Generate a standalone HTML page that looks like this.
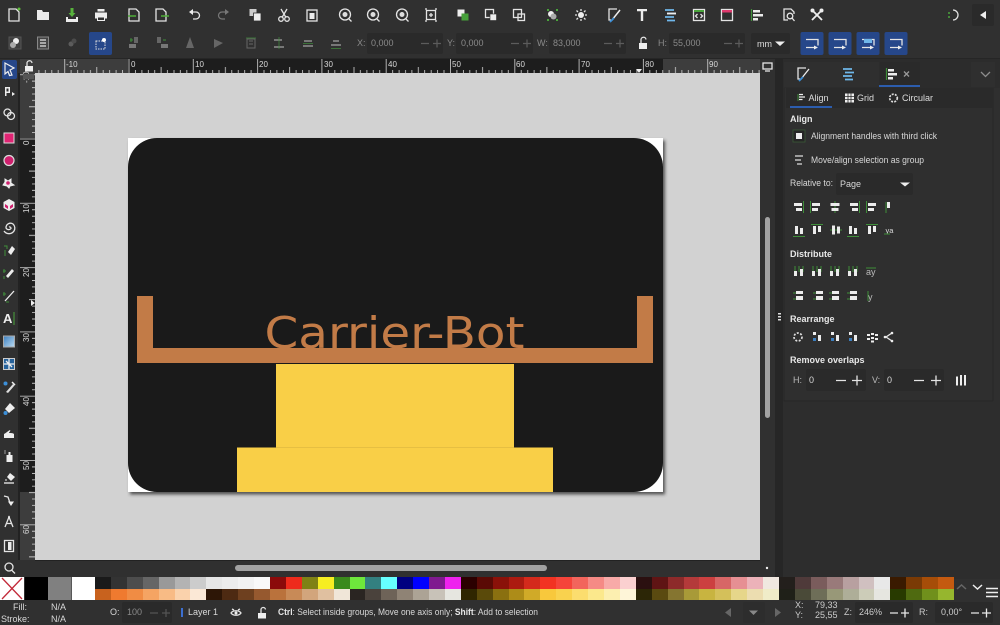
<!DOCTYPE html>
<html><head><meta charset="utf-8"><style>
html,body{margin:0;padding:0;width:1000px;height:625px;overflow:hidden;background:#303030}
svg{position:absolute;left:0;top:0}
text{font-family:"Liberation Sans",sans-serif;font-size:9px;fill:#d8d8d8}
.b{font-weight:bold;fill:#e8e8e8}
.g{fill:#8a8a8a}
.s{fill:none;stroke:#e4e4e4;stroke-width:1.3}
.d{fill:none;stroke:#777;stroke-width:1.2}
.w{fill:#ececec}
.gr{fill:none;stroke:#3f8f3a;stroke-width:1}
.row{position:absolute;left:95px;width:859px;height:11.5px;display:flex}
.row i{flex:1;display:block}
</style></head><body>
<svg width="1000" height="625" viewBox="0 0 1000 625">
<defs>
<filter id="bl" x="-5%" y="-5%" width="110%" height="110%"><feGaussianBlur stdDeviation="1.6"/></filter>
<pattern id="tt" patternUnits="userSpaceOnUse" x="128.5" y="59" width="64.3" height="14"><path d="M.5 0V14M6.9 11V14M13.4 11V14M19.8 11V14M26.2 11V14M32.6 8V14M39 11V14M45.5 11V14M51.9 11V14M58.3 11V14" stroke="#d4d4d4" stroke-width=".8" fill="none"/></pattern>
<pattern id="tv" patternUnits="userSpaceOnUse" x="20" y="138.5" width="15" height="64.3"><path d="M0 .5H15M12 6.9H15M12 13.4H15M12 19.8H15M12 26.2H15M9 32.6H15M12 39H15M12 45.5H15M12 51.9H15M12 58.3H15" stroke="#d4d4d4" stroke-width=".8" fill="none"/></pattern>
<g id="a1"><path class="gr" d="M-5.500 -6V6"/><rect class="w" x="-4" y="-4" width="8" height="3"/><rect class="w" x="-4" y="1" width="6" height="3"/></g>
<g id="a1c"><path class="gr" d="M0 -6V6"/><rect class="w" x="-4.500" y="-4" width="9" height="3"/><rect class="w" x="-3.500" y="1" width="7" height="3"/></g>
<g id="a1r"><path class="gr" d="M5.500 -6V6"/><rect class="w" x="-4" y="-4" width="8" height="3"/><rect class="w" x="-2" y="1" width="6" height="3"/></g>
<g id="a2"><path class="gr" d="M-6 6.500H6"/><rect class="w" x="-4" y="-4" width="3" height="8"/><rect class="w" x="1" y="-2" width="3" height="6"/></g>
<g id="a2c"><path class="gr" d="M-6 0H6"/><rect class="w" x="-4" y="-4.500" width="3" height="9"/><rect class="w" x="1" y="-3.500" width="3" height="7"/></g>
<g id="a2t"><path class="gr" d="M-6 -5.500H6"/><rect class="w" x="-4" y="-4" width="3" height="8"/><rect class="w" x="1" y="-4" width="3" height="6"/></g>
<g id="d1"><path class="gr" d="M-4 -6V0M0 -6V0M4 -6V0"/><rect class="w" x="-5" y="-1" width="3" height="5"/><rect class="w" x="1" y="-3" width="3" height="7"/></g>
<g id="d2"><path class="gr" d="M-6 -3H0M-6 3H0"/><rect class="w" x="-3" y="-5" width="7" height="3"/><rect class="w" x="-3" y="0" width="7" height="4"/></g>
<g id="re"><rect class="w" x="-4" y="-5" width="3" height="3"/><rect class="w" x="1" y="-2" width="3" height="6"/><rect x="-4" y="1" width="3" height="3" fill="#3c7fc0"/></g>
<g id="doc"><path class="s" d="M-5 -6H2L5 -3V6H-5Z"/></g>
<g id="blu"><rect x="-11.500" y="-11.500" width="23" height="23" rx="2" fill="#26478a"/><path class="s" d="M-6 -4H6V2M-6 4H4"/><path d="M2 2L6 4L2 6Z" fill="#eee"/></g>
<g id="mag"><circle r="5.500" cy="-.5" class="s" stroke-width="2"/><path class="s" d="M4 4L6.500 6.500"/><circle r="2.500" cy="-.5" fill="#ddd"/></g>
</defs>

<!-- base -->
<rect width="1000" height="625" fill="#303030"/>
<rect x="0" y="58" width="1000" height="1" fill="#262626"/>

<!-- rulers -->
<rect x="20" y="59" width="740" height="14" fill="#3d3d3d"/>
<rect x="128" y="59" width="535" height="14" fill="#1d1d1d"/>
<rect x="35" y="59" width="725" height="14" fill="url(#tt)"/>
<rect x="18" y="73" width="2" height="487" fill="#222"/>
<rect x="20" y="73" width="15" height="487" fill="#3d3d3d"/>
<rect x="20" y="138" width="15" height="354" fill="#1d1d1d"/>
<rect x="20" y="73" width="15" height="487" fill="url(#tv)"/>
<g fill="#cfcfcf">
<text x="66" y="67" font-size="8" style="font-size:8px">-10</text>
<text x="131" y="67" style="font-size:8px">0</text><text x="195" y="67" style="font-size:8px">10</text><text x="259" y="67" style="font-size:8px">20</text><text x="324" y="67" style="font-size:8px">30</text><text x="388" y="67" style="font-size:8px">40</text><text x="452" y="67" style="font-size:8px">50</text><text x="516" y="67" style="font-size:8px">60</text><text x="581" y="67" style="font-size:8px">70</text><text x="645" y="67" style="font-size:8px">80</text><text x="709" y="67" style="font-size:8px">90</text>
</g>
<g style="font-size:8px">
<text transform="translate(29,83) rotate(-90)" style="font-size:8px">-10</text>
<text transform="translate(29,145) rotate(-90)" style="font-size:8px">0</text>
<text transform="translate(29,213) rotate(-90)" style="font-size:8px">10</text>
<text transform="translate(29,277) rotate(-90)" style="font-size:8px">20</text>
<text transform="translate(29,342) rotate(-90)" style="font-size:8px">30</text>
<text transform="translate(29,406) rotate(-90)" style="font-size:8px">40</text>
<text transform="translate(29,470) rotate(-90)" style="font-size:8px">50</text>
<text transform="translate(29,534) rotate(-90)" style="font-size:8px">60</text>
</g>
<path d="M636 69H642L639 73Z" fill="#eee"/><path d="M31 300V306L35 303Z" fill="#eee"/>
<!-- corner lock -->
<rect x="25" y="66" width="8" height="5.500" fill="#eee"/><path class="s" d="M27 66V63.500A2.500 2.500 0 0 1 32 63" />
<rect x="23" y="74" width="11" height="5" fill="#555"/>

<!-- canvas -->
<rect x="35" y="73" width="725" height="487" fill="#d2d2d2"/>
<rect x="128" y="138" width="535" height="354" fill="#333" opacity=".8" transform="translate(2,2.500)" filter="url(#bl)"/>
<rect x="128" y="138" width="535" height="354" fill="#fff"/>
<rect x="128" y="138" width="535" height="354" rx="29" fill="#1a1a1a"/>
<text x="264.500" y="348" textLength="260" lengthAdjust="spacingAndGlyphs" style="font-family:'DejaVu Sans',sans-serif;font-size:44px;fill:#c27b47">Carrier-Bot</text>
<path d="M137 296H153V348H637V296H653V363H137Z" fill="#c27b47"/>
<rect x="276" y="364" width="238" height="83.500" fill="#f9cf47"/>
<rect x="237" y="447.500" width="316" height="44.500" fill="#f9cf47"/>
<rect x="276" y="447" width="238" height=".7" fill="#dfb840"/>

<!-- scrollbars -->
<rect x="760" y="59" width="15" height="513" fill="#303030"/>
<rect x="775" y="59" width="8" height="520" fill="#262626"/>
<rect x="765" y="217" width="5" height="201" rx="2.500" fill="#a2a2a2"/>
<path d="M778 313h3v1.500h-3zM778 316h3v1.500h-3zM778 319h3v1.500h-3z" fill="#ddd"/>
<rect x="0" y="560" width="775" height="17" fill="#303030"/>
<rect x="35" y="560" width="725" height="1" fill="#222"/>
<rect x="235" y="565" width="312" height="6" rx="3" fill="#a2a2a2"/>
<circle cx="767" cy="568" r="1.200" fill="#eee"/>
<!-- monitor icon -->
<rect x="763" y="63" width="9" height="6" class="s"/><path class="s" d="M765 71H770"/>

<!-- top toolbar icons (row 1) -->
<g transform="translate(14,15)"><use href="#doc"/><circle cx="5" cy="-6" r="1.500" fill="#5fbf3a"/></g>
<g transform="translate(43,15)"><path class="w" d="M-6 -5H-1L0 -3H6V5H-6Z"/></g>
<g transform="translate(72,15)"><path d="M-1.500 -7H1.500V-2H3.500L0 2L-3.500 -2H-1.500Z" fill="#57b23c"/><path class="w" d="M-6 2H-4V4H4V2H6V7H-6Z"/></g>
<g transform="translate(101,15)"><rect class="w" x="-6" y="-2.500" width="12" height="6"/><rect class="w" x="-3.500" y="-6" width="7" height="2.500"/><rect x="-3.500" y="2" width="7" height="3.500" fill="#303030" stroke="#eee"/></g>
<g transform="translate(134,15)"><use href="#doc"/><path d="M-6 1H2" stroke="#4fae38" stroke-width="1.500"/></g>
<g transform="translate(161,15)"><use href="#doc"/><path d="M0 1H8" stroke="#4fae38" stroke-width="1.500"/></g>
<g transform="translate(195,15)"><path class="s" d="M-4 -3H1A3.500 3.500 0 0 1 1 4H-2" stroke-width="1.500"/><path d="M-2 -6V0L-6 -3Z" fill="#eee"/></g>
<g transform="translate(223,15)"><path class="d" d="M4 -3H-1A3.500 3.500 0 0 0 -1 4H2" stroke-width="1.500"/><path d="M2 -6V0L6 -3Z" fill="#777"/></g>
<g transform="translate(255,15)"><rect x="-5.500" y="-6" width="7" height="7" fill="#ccc"/><rect x="-1.500" y="-2" width="7.500" height="8" fill="#eee" stroke="#303030" stroke-width=".8"/></g>
<g transform="translate(284,15)"><circle cx="-3" cy="4" r="2.300" class="s"/><circle cx="3" cy="4" r="2.300" class="s"/><path class="s" d="M-3 -6L2 2.500M3 -6L-2 2.500"/></g>
<g transform="translate(312,15)"><rect class="s" x="-5" y="-5" width="10" height="11"/><rect class="w" x="-2.500" y="-2" width="5" height="6"/></g>
<use href="#mag" x="345" y="15"/><use href="#mag" x="373" y="15"/><use href="#mag" x="402" y="15"/>
<g transform="translate(431,15)"><rect class="s" x="-4.500" y="-4.500" width="9" height="9"/><path class="s" d="M-2 0H2M0 -2V2M-6 -6H-4M4 -6H6M-6 6H-4M4 6H6"/></g>
<g transform="translate(463,15)"><rect x="-5.500" y="-5.500" width="7" height="7" fill="#eee"/><rect x="-1.500" y="-1.500" width="7" height="7" fill="#46a03a"/></g>
<g transform="translate(491,15)"><rect x="-5.500" y="-5.500" width="8" height="8" class="s"/><rect x="-1" y="-1" width="6.500" height="6.500" fill="#eee" stroke="#303030" stroke-width=".6"/></g>
<g transform="translate(519,15)"><rect x="-5.500" y="-5.500" width="8" height="8" class="s"/><rect x="-1" y="-1" width="6.500" height="6.500" class="s"/></g>
<g transform="translate(552,15)"><circle cx="-1" cy="-1" r="3" fill="#eee"/><circle cx="1.500" cy="1.500" r="3" fill="#aaa"/><path d="M-5 -6h2v2h-2zM4 -6h2v2h-2zM-5 4h2v2h-2zM4 4h2v2h-2z" fill="#4aa53c"/></g>
<g transform="translate(581,15)"><circle r="3" fill="#eee"/><path class="s" d="M-6 0H-4M4 0H6M0 -6V-4M0 4V6M-4.500 -4.500L-3 -3M3 3L4.500 4.500M4.500 -4.500L3 -3M-3 3L-4.500 4.500"/></g>
<g transform="translate(614,15)"><path class="s" d="M3 -6H-5V5H-3"/><path d="M6 -5L-2 5" stroke="#eee" stroke-width="1.500"/><path d="M0 3L-4 7" stroke="#3c8fd8" stroke-width="1.800"/></g>
<g transform="translate(642,15)"><path class="w" d="M-5 -6H5V-3.800H1.200V6H-1.200V-3.800H-5Z"/></g>
<g transform="translate(670,15)"><path d="M-5 -5H4M-3 -1.500H6M-5 2H4M-3 5.500H5" stroke="#6fb7ea" stroke-width="1.800" fill="none"/><path d="M-3 -1.500H6" stroke="#eee" stroke-width="1.800"/></g>
<g transform="translate(699,15)"><rect class="s" x="-5.500" y="-5.500" width="11" height="11"/><rect x="-5" y="-5" width="10" height="2" fill="#4aa53c"/><path class="s" d="M-1.500 -1L-3.500 1L-1.500 3M1.500 -1L3.500 1L1.500 3" stroke-width="1"/></g>
<g transform="translate(727,15)"><rect class="s" x="-5.500" y="-5.500" width="11" height="11"/><rect x="-5" y="-5" width="10" height="2.500" fill="#e03a6e"/></g>
<g transform="translate(757,15)"><path d="M-5.500 -6V6" stroke="#3f8f3a" stroke-width="1.200"/><rect class="w" x="-4" y="-5" width="7" height="2.500"/><rect class="w" x="-4" y="-1" width="10" height="2.500"/><rect class="w" x="-4" y="3" width="5" height="2.500"/></g>
<g transform="translate(789,15)"><path class="s" d="M-1 5H-5V-6H2L5 -3V-1"/><circle cx="1" cy="1" r="2.800" class="s"/><path class="s" d="M3 3L5.500 6"/></g>
<g transform="translate(817,15)"><path d="M-4 -4L5 5M5 -5L-5 5" stroke="#eee" stroke-width="1.800"/><circle cx="-4.500" cy="-4.500" r="2" fill="#eee"/><circle cx="4.500" cy="-4.500" r="2" fill="#eee"/></g>
<g transform="translate(954,15)"><path class="s" d="M-1 -5A5 5 0 1 1 -1 5" stroke-width="1.800"/><path d="M-5 -3V-1M-5 1V3" stroke="#4aa53c" stroke-width="1.500"/></g>
<rect x="972" y="4" width="22" height="22" rx="2" fill="#2a2a2a"/><path d="M986 11V19L980 15Z" fill="#eee"/>

<!-- second toolbar -->
<g transform="translate(15,43)"><rect x="-6" y="-6" width="12" height="12" fill="#3f3f3f" stroke="#555"/><circle cx="1" cy="-2" r="3" fill="#eee"/><circle cx="-2" cy="2" r="3" fill="#aaa"/></g>
<g transform="translate(43,43)"><rect x="-5.500" y="-6" width="11" height="12" fill="#444" stroke="#888"/><path class="s" d="M-3 -3H3M-3 0H3M-3 3H3"/></g>
<g transform="translate(72,43)"><circle cx="-1" cy="1" r="2.500" fill="#5c5c5c"/><circle cx="2" cy="-2" r="2.500" fill="#4c4c4c"/></g>
<rect x="89" y="32" width="23" height="23" rx="2" fill="#26478a"/>
<rect x="96" y="41" width="9" height="8" fill="none" stroke="#ddd" stroke-dasharray="1.500 1"/><circle cx="104" cy="40" r="2" fill="#fff"/>
<g transform="translate(134,43)"><rect x="-5" y="1" width="7" height="4" fill="#777"/><rect x="0" y="-6" width="4" height="6" fill="#666"/><path class="gr" d="M-4 -3H-1M-3 -1V-5"/></g>
<g transform="translate(162,43)"><rect x="-1" y="1" width="7" height="4" fill="#777"/><rect x="-5" y="-6" width="4" height="6" fill="#666"/><path class="gr" d="M1 -3H4"/></g>
<g transform="translate(190,43)"><path d="M0 -6L4 5H-4Z" fill="#666"/></g>
<g transform="translate(218,43)"><path d="M-4 -4L5 0L-4 5Z" fill="#666"/></g>
<g transform="translate(251,43)"><rect x="-4" y="-4" width="8" height="9" fill="none" stroke="#666"/><path class="gr" d="M-5 -5H5" opacity=".7"/><path d="M-2 -2H2M-2 1H2" stroke="#666"/></g>
<g transform="translate(279,43)"><path d="M-5 -3H3M-5 4H5" stroke="#777" stroke-width="2"/><path class="gr" d="M0 -6V6" opacity=".7"/></g>
<g transform="translate(308,43)"><path d="M-4 -2H4M-5 3H5" stroke="#777" stroke-width="2"/><path class="gr" d="M-5 .5H5" opacity=".7"/></g>
<g transform="translate(336,43)"><path d="M-3 -2H3M-5 2H5" stroke="#777" stroke-width="2"/><path class="gr" d="M-5 5.500H5" opacity=".7"/></g>
<g fill="#272727">
<rect x="367" y="33" width="76" height="21" rx="2" fill="#2a2a2a"/><rect x="456" y="33" width="77" height="21" rx="2" fill="#2a2a2a"/><rect x="549" y="33" width="77" height="21" rx="2" fill="#2a2a2a"/><rect x="669" y="33" width="76" height="21" rx="2" fill="#2a2a2a"/><rect x="751" y="33" width="39" height="21" rx="2" fill="#2a2a2a"/>
</g>
<text class="g" x="357" y="46">X:</text><text class="g" x="371" y="46">0,000</text>
<text class="g" x="447" y="46">Y:</text><text class="g" x="461" y="46">0,000</text>
<text class="g" x="537" y="46">W:</text><text class="g" x="553" y="46">83,000</text>
<text class="g" x="658" y="46">H:</text><text class="g" x="673" y="46">55,000</text>
<path d="M421 43.500H429M433 43.500H441M437 39.500V47.500M511 43.500H519M523 43.500H531M527 39.500V47.500M604 43.500H612M616 43.500H624M620 39.500V47.500M724 43.500H732M735 43.500H743M739 39.500V47.500" stroke="#5c5c5c" stroke-width="1.200" fill="none"/>
<rect x="639" y="43" width="8" height="6" fill="#eee"/><path class="s" d="M641 43V40A2 2 0 0 1 646 39.500"/>
<text x="757" y="47" style="fill:#ddd">mm</text><path d="M775 41.500H785L780 46Z" fill="#eee"/>
<use href="#blu" x="812" y="43.500"/><use href="#blu" x="840" y="43.500"/><use href="#blu" x="868" y="43.500"/><use href="#blu" x="896" y="43.500"/>
<rect x="864" y="39" width="8" height="4" fill="#6fb7ea"/>

<!-- left toolbar -->
<rect x="2" y="60" width="15" height="19" rx="2" fill="#26478a"/>
<path d="M5 63L14 68L10 70L12 75L9.500 75.500L8 71.500L5 74Z" fill="none" stroke="#eee" stroke-width="1.200"/>
<g transform="translate(9,91)"><rect class="w" x="-4" y="-4" width="5" height="6" /><rect x="-2.500" y="-2.500" width="2" height="3" fill="#303030"/><rect class="w" x="-4" y="2" width="1.500" height="3"/><path d="M3 1V5L6 3Z" fill="#eee"/></g>
<g transform="translate(9,114)"><circle cx="-1.500" cy="-1.500" r="3.500" class="s"/><circle cx="2" cy="2" r="3.500" class="s"/></g>
<rect x="4" y="133" width="10" height="10" fill="#e02473" stroke="#ddd"/>
<circle cx="9" cy="160.500" r="5" fill="#d0206e" stroke="#ddd" stroke-width="1.200"/>
<g transform="translate(9,183)"><path d="M-4 -4L-1 -2L2 -4V0L5 2L1 3L0 5L-2 3L-6 2L-4 -1Z" fill="#e8e8e8" stroke="#eee"/><circle cx="-1" cy="0" r="1.800" fill="#d0206e"/></g>
<g transform="translate(9,205)"><path d="M0 -6L5.500 -3V3L0 6L-5.500 3V-3Z" fill="#eee"/><path d="M-4 -1L-1 1V4L-4 2ZM1 1L4 -1V2L1 4Z" fill="#d0206e"/></g>
<g transform="translate(9,227)"><path class="s" d="M0 0A1.500 1.500 0 0 1 2 1.500A3 3 0 0 1 -3 1A4.500 4.500 0 0 1 4 -3A5.500 5.500 0 0 1 5 4A6 6 0 0 1 -5 4" stroke-width="1.300"/></g>
<g transform="translate(9,251)"><path d="M-1 1L3 -5L6 -2L2 4Z" fill="#eee"/><path class="gr" d="M-5 -5H-2V-2M-4 -1V5" stroke-width="1.200"/></g>
<g transform="translate(9,273)"><path d="M-3 3L3 -4L5 -2L-1 5Z" fill="#eee"/><path class="gr" d="M-5 -4V0M-6 -2H-3M-5 3V6" stroke-width="1.200"/></g>
<g transform="translate(9,296)"><path d="M-4 5L5 -5" stroke="#eee" stroke-width="1.300"/><path class="gr" d="M-5 -4V0M-6 -2H-3M-3 6H0" stroke-width="1.200"/></g>
<text x="3" y="323" style="font-family:'Liberation Sans',sans-serif;font-size:13px;font-weight:bold;fill:#eee">A</text><path d="M14 312V325" stroke="#4aa53c" stroke-width="1"/>
<defs><linearGradient id="gd" x1="0" y1="0" x2="1" y2="1"><stop offset="0" stop-color="#3c7fc0"/><stop offset="1" stop-color="#bcdcf2"/></linearGradient></defs>
<rect x="3.500" y="336" width="11" height="11" fill="url(#gd)" stroke="#aaa"/>
<g transform="translate(9,364)"><rect x="-5.500" y="-5.500" width="11" height="11" fill="#27639c" stroke="#ccc"/><path d="M-5 0H5M0 -5V5M-3 -3L3 3" stroke="#eee" stroke-width="1.300"/></g>
<g transform="translate(9,387)"><path d="M-3 5L4 -3L5.500 -1.500L-1 6Z" fill="#ddd"/><circle cx="-3.500" cy="-3.500" r="2" fill="#3c8fd8"/><path d="M3 -5L6 -2" stroke="#eee" stroke-width="1.500"/></g>
<g transform="translate(9,409)"><path d="M1 -6L6 -1L0 4L-4 0Z" fill="#eee"/><circle cx="-3.500" cy="4" r="2" fill="#3c8fd8"/></g>
<g transform="translate(9,434)"><path d="M-5 4V0C-3 -1 -1 -3 1 -4C2 -3 0 -2 0 -1C2 -1 4 -1 5 0V4Z" fill="#eee"/></g>
<g transform="translate(9,456)"><rect x="-2.500" y="-1" width="6" height="7" fill="#eee"/><rect x="-.5" y="-4" width="2" height="3" fill="#eee"/><rect x="-5" y="-6" width="2" height="4" fill="#666"/></g>
<g transform="translate(9,479)"><path d="M1 -6L6 -2L2 2L-2 -2Z" fill="#eee"/><path d="M-5 4H5" stroke="#eee" stroke-width="1.300"/><path d="M-4 1H-2" stroke="#eee"/></g>
<g transform="translate(9,500)"><path class="s" d="M-5 -4L-1 -3L1 3" stroke-width="1.800"/><path d="M-1 1.500H5L2 6Z" fill="#eee"/></g>
<g transform="translate(9,522)"><path class="s" d="M-4 5L0 -5L4 5M-2.500 1.500H2.500"/><circle cy="-5" r="1" fill="#eee"/></g>
<g transform="translate(9,546)"><rect class="s" x="-4.500" y="-5.500" width="9" height="11"/><rect class="w" x="-1" y="-4" width="3.500" height="8"/></g>
<g transform="translate(9,568)"><circle r="4" cy="-1" class="s" stroke-width="1.500"/><path class="s" d="M2.500 2L6 5.500" stroke-width="1.500"/></g>

<!-- right panel -->
<rect x="783" y="59" width="217" height="29" fill="#2c2c2c"/>
<rect x="783" y="88" width="217" height="312" fill="#2f2f2f"/>
<rect x="783" y="400" width="217" height="179" fill="#2d2d2d"/>
<path d="M784 88V401H993" fill="none" stroke="#272727"/><path d="M993 88V401" stroke="#272727"/>
<rect x="784" y="62" width="95" height="25" fill="#2f2f2f"/><rect x="880" y="62" width="40" height="25" fill="#2a2a2a"/><rect x="971" y="62" width="24" height="25" fill="#2f2f2f"/>
<rect x="879" y="85" width="41" height="2" fill="#2c5dae"/>
<g transform="translate(803,74)"><path class="s" d="M3 -6H-5V5H-3"/><path d="M6 -5L-2 5" stroke="#eee" stroke-width="1.300"/><path d="M0 3L-4 7" stroke="#3c8fd8" stroke-width="1.800"/></g>
<g transform="translate(848,74)"><path d="M-5 -5H4M-3 -1.500H6M-5 2H4M-3 5.500H5" stroke="#6fb7ea" stroke-width="1.700" fill="none"/></g>
<g transform="translate(892,74)"><path d="M-5.500 -6V6" stroke="#3f8f3a" stroke-width="1.200"/><rect class="w" x="-4" y="-5" width="6" height="2.500"/><rect class="w" x="-4" y="-1" width="9" height="2.500"/><rect class="w" x="-4" y="3" width="5" height="2.500"/></g>
<path d="M904 71.500L909 76.500M909 71.500L904 76.500" stroke="#999" stroke-width="1.300"/>
<path d="M981 72L985.500 76.500L990 72" fill="none" stroke="#8c8c8c" stroke-width="1.300"/>

<rect x="786" y="88" width="207" height="20" fill="#2a2a2a"/>
<rect x="790" y="106" width="42" height="2" fill="#2c5dae"/>
<path d="M798 94V101" stroke="#3f8f3a"/><path d="M799 94.500h4M799 97h6M799 99.500h3.500" stroke="#eee" stroke-width="1.300"/>
<text x="808.500" y="101" style="fill:#ddd">Align</text>
<path d="M845 93.500h9v9h-9z" fill="#eee"/><path d="M848 93.500v9M851 93.500v9M845 96.500h9M845 99.500h9" stroke="#2a2a2a" stroke-width=".8"/>
<text x="857" y="101" style="fill:#ddd">Grid</text>
<circle cx="893.500" cy="98" r="3.800" fill="none" stroke="#ddd" stroke-width="1.700" stroke-dasharray="2 1.200"/>
<text x="902" y="101" style="fill:#ddd">Circular</text>

<text class="b" x="790" y="122">Align</text>
<rect x="793" y="130" width="12" height="12" fill="#262626" stroke="#3a5a38" stroke-width=".8"/><rect x="796" y="133" width="6" height="6" fill="#eee"/>
<text x="811" y="139" textLength="126" lengthAdjust="spacingAndGlyphs">Alignment handles with third click</text>
<path d="M795 156h8M795 160h6M797 164h5" stroke="#ddd" stroke-width="1.300"/>
<text x="811" y="163" textLength="113" lengthAdjust="spacingAndGlyphs">Move/align selection as group</text>
<text x="790" y="186" textLength="43" lengthAdjust="spacingAndGlyphs">Relative to:</text>
<rect x="836" y="173" width="77" height="22" rx="2" fill="#2a2a2a"/>
<text x="840" y="187">Page</text><path d="M900 182.500H910L905 186.500Z" fill="#eee"/>

<use href="#a1r" x="798" y="207"/><use href="#a1" x="816" y="207"/><use href="#a1c" x="835" y="207"/><use href="#a1r" x="854" y="207"/><use href="#a1" x="872" y="207"/>
<g transform="translate(888,207)"><path class="w" d="M-1 -5h3v6h-3z"/><path class="gr" d="M-2 -5V6"/></g>
<use href="#a2" x="799" y="230"/><use href="#a2t" x="817" y="230"/><use href="#a2c" x="836" y="230"/><use href="#a2" x="853" y="230"/><use href="#a2t" x="872" y="230"/>
<text x="885.500" y="233" style="font-size:7.500px;fill:#ddd">ya</text><path class="gr" d="M884 234H890"/>

<text class="b" x="790" y="257">Distribute</text>
<use href="#d1" x="799" y="272"/><use href="#d1" x="817" y="272"/><use href="#d1" x="835" y="272"/><use href="#d1" x="853" y="272"/>
<text x="866" y="275" style="font-size:9px;fill:#bbb">ay</text><path class="gr" d="M866 268H876"/>
<use href="#d2" x="799" y="296"/><use href="#d2" x="819" y="296"/><use href="#d2" x="835" y="296"/><use href="#d2" x="853" y="296"/>
<text x="868" y="300" style="font-size:9px;fill:#bbb">y</text><path class="gr" d="M868 291V301"/>

<text class="b" x="790" y="322">Rearrange</text>
<g transform="translate(798,337)"><circle r="4" fill="none" stroke="#ddd" stroke-width="1.700" stroke-dasharray="2 1.500"/></g>
<use href="#re" x="817" y="337"/><use href="#re" x="835" y="337"/><use href="#re" x="853" y="337"/>
<g transform="translate(872,337)" fill="#eee"><rect x="-5" y="-3" width="3" height="2"/><rect x="-1" y="-4" width="3" height="2"/><rect x="3" y="-3" width="3" height="2"/><rect x="-5" y="1" width="3" height="2"/><rect x="-1" y="0" width="3" height="2"/><rect x="3" y="1" width="3" height="2"/><rect x="-1" y="3.500" width="3" height="2"/></g>
<g transform="translate(889,337)"><path class="s" d="M-3 0L3 -4M-3 0L3 4" stroke-width=".8"/><circle cx="-4" r="1.300" fill="#eee"/><circle cx="3" cy="-4" r="1.300" fill="#eee"/><circle cx="3" cy="4" r="1.300" fill="#eee"/></g>

<text class="b" x="790" y="363">Remove overlaps</text>
<rect x="806" y="369" width="60" height="22" rx="2" fill="#2a2a2a"/><rect x="884" y="369" width="60" height="22" rx="2" fill="#2a2a2a"/>
<text x="793" y="383" style="fill:#bbb">H:</text><text x="809" y="383">0</text>
<text x="872" y="383" style="fill:#bbb">V:</text><text x="887" y="383">0</text>
<path d="M836 380.500H846M852 380.500H862M857 375.500V385.500M914 380.500H924M931 380.500H941M936 375.500V385.500" stroke="#e4e4e4" stroke-width="1.300" fill="none"/>
<path d="M956 376.500h2v9h-2zM960 375h2v10.500h-2zM964 375h2v10.500h-2z" fill="#eee"/>

<!-- big swatches -->
<rect x="0" y="577" width="24" height="23" fill="#fff"/><path d="M2 578L22 599M22 578L2 599" stroke="#c22a3a" stroke-width="1.300"/>
<rect x="25" y="577" width="23" height="23" fill="#000"/>
<rect x="48" y="577" width="23.500" height="23" fill="#808080"/>
<rect x="72" y="577" width="23" height="23" fill="#fff"/>
<path d="M957 589L961.500 585L966 589" fill="none" stroke="#666" stroke-width="1.500"/>
<path d="M973 585L977.500 589L982 585" fill="none" stroke="#eee" stroke-width="1.500"/>
<path d="M986 588.500H998M986 592.500H998M986 596.500H998" stroke="#eee" stroke-width="1.500"/>

<!-- status bar -->
<rect x="0" y="600" width="1000" height="25" fill="#303030"/>
<text x="13" y="610">Fill:</text><text x="1" y="622">Stroke:</text>
<text x="51" y="610">N/A</text><text x="51" y="622">N/A</text>
<text x="110" y="615">O:</text>
<rect x="122" y="602" width="50" height="21" rx="2" fill="#2a2a2a"/>
<text class="g" x="127" y="615">100</text>
<path d="M150 613H158M162 613H170M166 609V617" stroke="#555" stroke-width="1.200" fill="none"/>
<rect x="181" y="608" width="2" height="9" fill="#3c6fd0"/>
<text x="188" y="615">Layer 1</text>
<g transform="translate(236,613)"><path class="s" d="M-5 0C-3 -3 3 -3 5 0C3 3 -3 3 -5 0Z" stroke-width="1.500"/><circle r="1.500" fill="#eee"/><path class="s" d="M-4 -4L-2 -3M4 -4L2 -3"/></g>
<g transform="translate(262,613)"><rect x="-4" y="0" width="8" height="5.500" fill="#eee"/><path class="s" d="M-1 0V-3A2 2 0 0 1 3.500 -3.500"/></g>
<text x="278" y="615" textLength="260" lengthAdjust="spacingAndGlyphs"><tspan class="b">Ctrl</tspan>: Select inside groups, Move one axis only; <tspan class="b">Shift</tspan>: Add to selection</text>
<path d="M731 608V617L725 612.500Z" fill="#666"/>
<rect x="743" y="602" width="22" height="21" rx="2" fill="#2d2d2d"/>
<path d="M749 610.500H758L753.500 615Z" fill="#888"/>
<path d="M775 608V617L781 612.500Z" fill="#666"/>
<text x="795" y="608" style="fill:#ccc">X:</text><text x="795" y="618" style="fill:#ccc">Y:</text>
<text x="815" y="608" style="fill:#ccc">79,33</text><text x="815" y="618" style="fill:#ccc">25,55</text>
<text x="844" y="615" style="fill:#ccc">Z:</text>
<rect x="855" y="602" width="58" height="21" rx="2" fill="#2a2a2a"/>
<text x="859" y="615" style="fill:#ccc">246%</text>
<path d="M890 613H898M901 613H909M905 608.500V617.500" stroke="#e8e8e8" stroke-width="1.300" fill="none"/>
<text x="919" y="615" style="fill:#ccc">R:</text>
<rect x="935" y="602" width="58" height="21" rx="2" fill="#2a2a2a"/>
<text x="941" y="615" style="fill:#ccc">0,00°</text>
<path d="M971 613H979M982 613H991M986.500 608.500V617.500" stroke="#e8e8e8" stroke-width="1.300" fill="none"/>
</svg>

<div class="row" style="top:577px">
<i style="background:#1a1a1a"></i><i style="background:#333"></i><i style="background:#4d4d4d"></i><i style="background:#666"></i><i style="background:#999"></i><i style="background:#b3b3b3"></i><i style="background:#ccc"></i><i style="background:#e6e6e6"></i><i style="background:#ececec"></i><i style="background:#f2f2f2"></i><i style="background:#f9f9f9"></i>
<i style="background:#8b0a0a"></i><i style="background:#ee2b1c"></i><i style="background:#7f8215"></i><i style="background:#f6ee22"></i><i style="background:#3a8a1c"></i><i style="background:#6ee63c"></i><i style="background:#338080"></i><i style="background:#66ffff"></i><i style="background:#000080"></i><i style="background:#0000ff"></i><i style="background:#7f1a8f"></i><i style="background:#ee22ee"></i>
<i style="background:#2b0000"></i><i style="background:#5a0a05"></i><i style="background:#8a1109"></i><i style="background:#ac1a10"></i><i style="background:#d42a1c"></i><i style="background:#f23322"></i><i style="background:#f5443a"></i><i style="background:#f2655c"></i><i style="background:#f58a85"></i><i style="background:#f8aaa8"></i><i style="background:#fbd0d0"></i>
<i style="background:#2b1010"></i><i style="background:#5f1414"></i><i style="background:#8d2a2a"></i><i style="background:#b43a3a"></i><i style="background:#cc4040"></i><i style="background:#d76666"></i><i style="background:#e68f93"></i><i style="background:#ecb2b9"></i><i style="background:#f0e8e0"></i>
<i style="background:#231f1c"></i><i style="background:#4f3a3a"></i><i style="background:#7a5c5c"></i><i style="background:#997a7a"></i><i style="background:#b8a0a0"></i><i style="background:#d0c0c0"></i><i style="background:#e8e8e8"></i>
<i style="background:#3a1a00"></i><i style="background:#7a3a05"></i><i style="background:#a64d08"></i><i style="background:#c45a10"></i>
</div>
<div class="row" style="top:588.5px">
<i style="background:#c8621e"></i><i style="background:#ef7a2f"></i><i style="background:#f08c44"></i><i style="background:#f5a463"></i><i style="background:#f8bb85"></i><i style="background:#fad2ac"></i><i style="background:#fbe8d6"></i>
<i style="background:#2d1606"></i><i style="background:#4d2a12"></i><i style="background:#6e401f"></i><i style="background:#96592f"></i><i style="background:#ba723c"></i><i style="background:#c88a57"></i><i style="background:#d2a57c"></i><i style="background:#e0c0a0"></i><i style="background:#f0e6d8"></i>
<i style="background:#2a2522"></i><i style="background:#4a423c"></i><i style="background:#6e6358"></i><i style="background:#8f8375"></i><i style="background:#aca395"></i><i style="background:#c8c2b8"></i><i style="background:#e6e6e0"></i>
<i style="background:#2f2600"></i><i style="background:#5a4a0a"></i><i style="background:#8a7010"></i><i style="background:#ad8c18"></i><i style="background:#d0aa28"></i><i style="background:#f8c83c"></i><i style="background:#f9d24e"></i><i style="background:#fbdd6e"></i><i style="background:#fbe88c"></i><i style="background:#fcefb0"></i><i style="background:#fef5d8"></i>
<i style="background:#2c2606"></i><i style="background:#5a4a10"></i><i style="background:#857530"></i><i style="background:#a89a38"></i><i style="background:#c8b440"></i><i style="background:#d4c05a"></i><i style="background:#e6d68a"></i><i style="background:#ecddb0"></i><i style="background:#f0ecc8"></i>
<i style="background:#1f2018"></i><i style="background:#4a4a38"></i><i style="background:#6e6e58"></i><i style="background:#989878"></i><i style="background:#aeae98"></i><i style="background:#ccccb8"></i><i style="background:#e6e6e0"></i>
<i style="background:#283a00"></i><i style="background:#4f6a10"></i><i style="background:#70901c"></i><i style="background:#96b62e"></i>
</div>
</body></html>
